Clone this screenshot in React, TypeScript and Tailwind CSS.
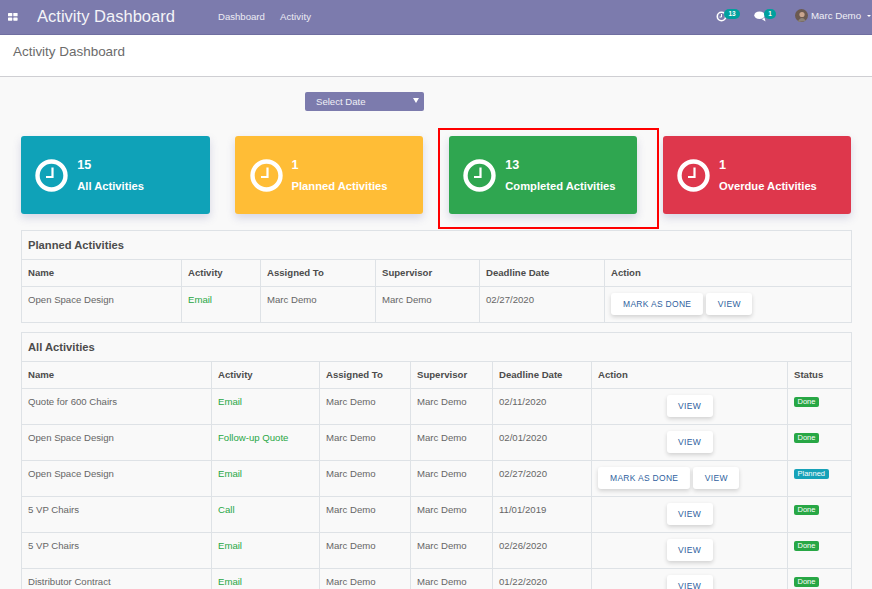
import React from "react";

const font = { fontFamily: '"Liberation Sans", Arial, sans-serif' };

function Clock() {
  return (
    <svg width="33" height="33" viewBox="0 0 33 33" className="shrink-0">
      <circle cx="16.5" cy="16.5" r="14" fill="none" stroke="#fff" strokeWidth="4.4" />
      <path d="M17.5 8.5V18H11" fill="none" stroke="#fff" strokeWidth="2.2" />
    </svg>
  );
}

function Card({ n, label, color }: { n: string; label: string; color: string }) {
  return (
    <div className={`h-[78px] rounded-[3px] flex items-center pl-[14.25px] text-white shadow-[0_4px_8px_rgba(90,90,160,0.22)] ${color}`}>
      <Clock />
      <div className="ml-[9px] font-bold text-[11.2px] leading-none">
        <div className="text-[12.6px] mb-[9px] mt-[1px]">{n}</div>
        <div>{label}</div>
      </div>
    </div>
  );
}

function Btn({ children }: { children: React.ReactNode }) {
  return (
    <span className="inline-block h-[22px] leading-[22px] px-[12px] bg-white rounded-[3px] text-[8.5px] tracking-[0.3px] text-[#2f5f9e] shadow-[0_2px_4px_rgba(0,0,0,0.16)]">
      {children}
    </span>
  );
}

function ViewBtn() {
  return (
    <span className="inline-block w-[46px] text-center h-[22px] leading-[22px] bg-white rounded-[3px] text-[8.5px] tracking-[0.3px] text-[#2f5f9e] shadow-[0_2px_4px_rgba(0,0,0,0.16)]">
      VIEW
    </span>
  );
}

function Badge({ t }: { t: string }) {
  const c = t === "Done" ? "bg-[#28a745]" : "bg-[#17a2b8]";
  return <span className={`block w-fit h-[10px] leading-[10px] px-[3.5px] rounded-[2px] text-[7.5px] text-white ${c}`}>{t}</span>;
}

const cellB = "border border-[#dee2e6]";
const th = `${cellB} text-left align-middle px-[6px] text-[9.6px] font-bold text-[#4c4c4c] h-[27px]`;
const tdBase = `${cellB} align-top pt-[6px] px-[6px] text-[9.6px] h-[36px]`;
const td = `${tdBase} text-[#666]`;
const tdGreen = `${tdBase} text-[#28a745]`;

function TableWrap({ title, widths, head, children }: { title: string; widths: number[]; head: string[]; children: React.ReactNode }) {
  return (
    <table className="table-fixed border-collapse w-[830px] ml-[21px]">
      <colgroup>
        {widths.map((w, i) => (
          <col key={i} style={{ width: w }} />
        ))}
      </colgroup>
      <thead>
        <tr>
          <th colSpan={widths.length} className={`${cellB} text-left px-[6px] h-[29px] text-[11.2px] font-bold text-[#4c4c4c]`}>
            {title}
          </th>
        </tr>
        <tr>
          {head.map((h) => (
            <th key={h} className={th}>{h}</th>
          ))}
        </tr>
      </thead>
      <tbody>{children}</tbody>
    </table>
  );
}

const rows = [
  ["Quote for 600 Chairs", "Email", "02/11/2020", "Done"],
  ["Open Space Design", "Follow-up Quote", "02/01/2020", "Done"],
  ["Open Space Design", "Email", "02/27/2020", "Planned"],
  ["5 VP Chairs", "Call", "11/01/2019", "Done"],
  ["5 VP Chairs", "Email", "02/26/2020", "Done"],
  ["Distributor Contract", "Email", "01/22/2020", "Done"],
];

export default function App() {
  return (
    <div className="relative h-[589px] w-[872px] overflow-hidden bg-[#f9f9f9]" style={font}>
      <nav className="h-[35px] bg-[#7c7bad] flex items-center text-white border-b border-[#6f6ea0]">
        <svg width="10" height="8" viewBox="0 0 10 8" className="ml-[8px]" fill="#fff">
          <rect x="0" y="0" width="4.3" height="3.3" rx="0.6" />
          <rect x="5.3" y="0" width="4.3" height="3.3" rx="0.6" />
          <rect x="0" y="4.4" width="4.3" height="3.3" rx="0.6" />
          <rect x="5.3" y="4.4" width="4.3" height="3.3" rx="0.6" />
        </svg>
        <span className="ml-[19px] text-[16.56px] text-[#f4f4f8]">Activity Dashboard</span>
        <span className="ml-[43px] text-[9.6px] text-[#ececf4]">Dashboard</span>
        <span className="ml-[15px] text-[9.6px] tracking-[0.1px] text-[#ececf4]">Activity</span>
        <div className="absolute left-[716px] top-[9px] flex items-start">
          <div className="relative w-[24px] h-[12px]">
            <svg width="11" height="11" viewBox="0 0 11 11" className="absolute left-0 top-[1.5px]">
              <circle cx="5.5" cy="5.5" r="4.2" fill="none" stroke="#fff" strokeWidth="1.6" />
              <path d="M5.5 3V6H3.5" fill="none" stroke="#fff" strokeWidth="1" />
            </svg>
            <span className="absolute left-[8px] top-0 h-[10px] w-[16px] text-center leading-[10px] rounded-full bg-[#00a09d] text-[6.4px] font-bold text-white">13</span>
          </div>
          <div className="relative w-[22px] h-[12px] ml-[14px]">
            <svg width="13" height="11" viewBox="0 0 13 11" className="absolute left-0 top-[2px]" fill="#fff">
              <ellipse cx="5.5" cy="4.2" rx="5.2" ry="3.8" />
              <path d="M8 8.2 L11.5 10.5 L10.5 6.5Z" />
            </svg>
            <span className="absolute left-[10px] top-0 h-[10px] w-[12px] text-center leading-[10px] rounded-full bg-[#00a09d] text-[6.4px] font-bold text-white">1</span>
          </div>
          <svg width="13" height="13" viewBox="0 0 13 13" className="ml-[19px]">
            <circle cx="6.5" cy="6.5" r="6.5" fill="#6b5a50" />
            <circle cx="7" cy="5.5" r="2.6" fill="#c9a58e" />
            <path d="M3 13c.5-3 2.5-4 4-4s3 1 3.5 3z" fill="#8b8278" />
          </svg>
          <span className="ml-[3px] text-[9.7px] leading-[14px] text-[#f0f0f6]">Marc Demo</span>
          <span className="ml-[6px] mt-[6px] w-0 h-0 border-x-[2px] border-x-transparent border-t-[2.5px] border-t-white" />
        </div>
      </nav>

      <div className="h-[42px] bg-white border-b border-[#cfcfd3] pl-[13px] pt-[9px] text-[13.44px] leading-[15px] text-[#6b6b6b]">
        Activity Dashboard
      </div>

      <div className="relative ml-[305px] mt-[15px] w-[119px] h-[19px] bg-[#7c7bad] rounded-[2px] pl-[11px] text-[9.6px] leading-[20px] text-[#f0f0f6]">
        Select Date
        <span className="absolute right-[5.5px] top-[6px] w-0 h-0 border-x-[3px] border-x-transparent border-t-[5px] border-t-white" />
      </div>

      <div className="ml-[21px] mt-[25px] grid grid-cols-[188.5px_188px_188px_188px] gap-[25.75px]">
        <Card n="15" label="All Activities" color="bg-[#0fa2b8]" />
        <Card n="1" label="Planned Activities" color="bg-[#ffbd36]" />
        <Card n="13" label="Completed Activities" color="bg-[#2fa650]" />
        <Card n="1" label="Overdue Activities" color="bg-[#de374c]" />
      </div>

      <div className="mt-[16px]">
        <TableWrap
          title="Planned Activities"
          widths={[160, 79, 115, 104, 125, 247]}
          head={["Name", "Activity", "Assigned To", "Supervisor", "Deadline Date", "Action"]}
        >
          <tr>
            <td className={td}>Open Space Design</td>
            <td className={tdGreen}>Email</td>
            <td className={td}>Marc Demo</td>
            <td className={td}>Marc Demo</td>
            <td className={td}>02/27/2020</td>
            <td className={td}>
              <div className="flex gap-[3px]"><Btn>MARK AS DONE</Btn><ViewBtn /></div>
            </td>
          </tr>
        </TableWrap>
      </div>

      <div className="mt-[9px]">
        <TableWrap
          title="All Activities"
          widths={[190, 108, 91, 82, 99, 196, 64]}
          head={["Name", "Activity", "Assigned To", "Supervisor", "Deadline Date", "Action", "Status"]}
        >
          {rows.map((r, i) => (
            <tr key={i}>
              <td className={td}>{r[0]}</td>
              <td className={tdGreen}>{r[1]}</td>
              <td className={td}>Marc Demo</td>
              <td className={td}>Marc Demo</td>
              <td className={td}>{r[2]}</td>
              <td className={td}>
                {r[3] === "Planned" ? (
                  <div className="flex gap-[3px]"><Btn>MARK AS DONE</Btn><ViewBtn /></div>
                ) : (
                  <div className="flex justify-center"><ViewBtn /></div>
                )}
              </td>
              <td className={td}><div className="mt-[2px]"><Badge t={r[3]} /></div></td>
            </tr>
          ))}
        </TableWrap>
      </div>

      <div className="absolute left-[438px] top-[128px] w-[221px] h-[101px] border-2 border-[#f00]" />
    </div>
  );
}
